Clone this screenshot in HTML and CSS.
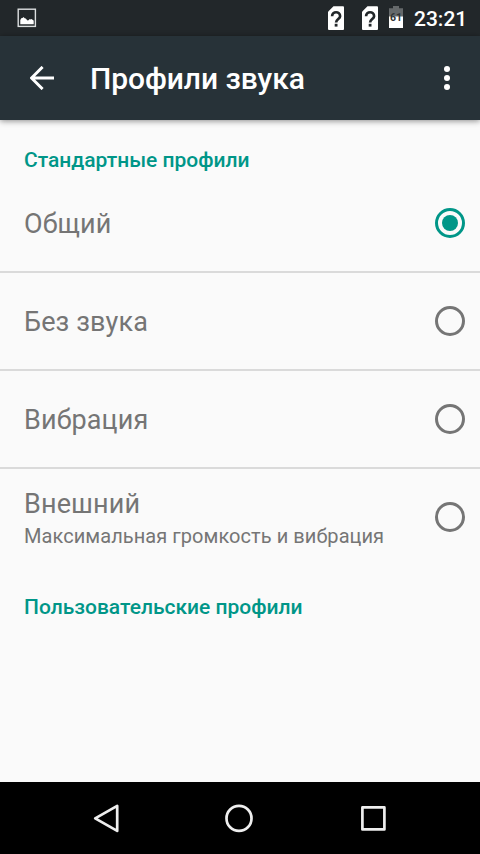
FILE: index.html
```html
<!DOCTYPE html>
<html lang="ru">
<head>
<meta charset="utf-8">
<title>Профили звука</title>
<link rel="stylesheet" href="styles.css">
</head>
<body>
<div class="screen">
  <div class="status">
    <svg class="picture" width="20" height="20" viewBox="0 0 20 20"><rect x="1.2" y="1.2" width="17.2" height="17.2" fill="none" stroke="#dcdfe0" stroke-width="1.4"/><path d="M3.3 16.2v-4.3l1-1.7 1.6-.4.6-.8 1.2 1.2 1 .2 1.8 2 1-.2 1.3-1.2 1 .4.8-.5.8.8.8.2.5 1v3.3z" fill="#fff"/></svg>
    <svg class="sim" width="17" height="24" viewBox="0 0 17 24"><path d="M5.500 .3H15q1 0 1 1V23q0 1-1 1H1q-1 0-1-1V5.800z" fill="#fff"/><path d="M4.100 10.200C4.100 4.900 12.100 4.900 12.100 10.200c0 2.700-4 2.900-4 6.200" fill="none" stroke="#22272a" stroke-width="2.700"/><rect x="6.700" y="17.800" width="2.800" height="2.800" fill="#22272a"/></svg>
    <svg class="sim sim-two" width="17" height="24" viewBox="0 0 17 24"><path d="M5.500 .3H15q1 0 1 1V23q0 1-1 1H1q-1 0-1-1V5.800z" fill="#fff"/><path d="M4.100 10.200C4.100 4.900 12.100 4.900 12.100 10.200c0 2.700-4 2.900-4 6.200" fill="none" stroke="#22272a" stroke-width="2.700"/><rect x="6.700" y="17.800" width="2.800" height="2.800" fill="#22272a"/></svg>
    <svg class="battery" width="14" height="22" viewBox="0 0 14 22"><path d="M0 2.200h4V0h6v2.200h4V11H0z" fill="#65696b"/><path d="M0 10.500h14V22H0z" fill="#fff"/><text class="level" x="7" y="15" text-anchor="middle">61</text></svg>
    <span class="clock">23:21</span>
  </div>
  <header class="bar">
    <svg class="back" width="24" height="24" viewBox="0 0 24 24"><path d="M24 12H2M12.600 .9L1.500 12l11.100 11.100" fill="none" stroke="#fff" stroke-width="2.900"/></svg>
    <h1 class="title">Профили звука</h1>
    <svg class="more" width="6" height="24" viewBox="0 0 6 24"><g fill="#fff"><circle cx="3" cy="3" r="3"/><circle cx="3" cy="12" r="3"/><circle cx="3" cy="21" r="3"/></g></svg>
  </header>
  <main class="content">
    <h2 class="category first">Стандартные профили</h2>
    <div class="row"><span class="name">Общий</span><span class="radio checked"></span></div>
    <div class="row"><span class="name">Без звука</span><span class="radio"></span></div>
    <div class="row"><span class="name">Вибрация</span><span class="radio"></span></div>
    <div class="row"><div class="label"><div class="name">Внешний</div><div class="summary">Максимальная громкость и вибрация</div></div><span class="radio"></span></div>
    <h2 class="category">Пользовательские профили</h2>
  </main>
  <nav class="nav">
    <svg width="28" height="30" viewBox="0 0 28 30"><path d="M25.200 2.900v25L3.200 15.400z" fill="none" stroke="#eee" stroke-width="2.700" stroke-linejoin="round"/></svg>
    <svg width="30" height="30" viewBox="0 0 30 30"><circle cx="15" cy="15.400" r="12.500" fill="none" stroke="#eee" stroke-width="2.700"/></svg>
    <svg width="28" height="30" viewBox="0 0 28 30"><rect x="3.400" y="4.400" width="22" height="22" fill="none" stroke="#eee" stroke-width="2.700" stroke-linejoin="round"/></svg>
  </nav>
</div>
</body>
</html>
```
FILE: styles.css
```css
* { box-sizing: border-box; }
body { margin: 0; font-family: Roboto, "Noto Sans", sans-serif; }
svg { display: block; flex: none; }
h1, h2 { margin: 0; font-weight: 500; white-space: nowrap; }
.screen { width: 480px; height: 854px; display: flex; flex-direction: column; background: #fafafa; overflow: hidden; }
.status { height: 36px; flex: none; display: flex; align-items: flex-start; background: #22272a; color: #fff; }
.picture { margin: 8px 0 0 17px; }
.sim { margin: 6px 0 0 291px; }
.sim-two { margin-left: 17px; }
.battery { margin: 6px 0 0 10px; }
.level { font: 700 10.5px Roboto, sans-serif; fill: #303436; }
.clock { margin-left: 11px; font-size: 21px; font-weight: 500; line-height: 38px; }
.bar { height: 84px; flex: none; display: flex; align-items: center; padding: 0 30px; background: #273238; color: #fff; box-shadow: 0 1px 6px rgba(0, 0, 0, .45); }
.title { flex: 1; margin-left: 36px; padding-top: 2px; font-size: 30px; line-height: 36px; letter-spacing: -.06px; }
.content { flex: 1; }
.category { height: 48px; padding: 28px 24px 0; font-size: 21px; line-height: 24px; color: #009688; }
.category.first { height: 55px; }
.row { height: 98px; display: flex; align-items: center; justify-content: space-between; padding: 0 15px 0 24px; border-bottom: 2px solid #dadada; color: #757575; }
.row:nth-of-type(4) { border-bottom-color: transparent; }
.name { padding-top: 2px; font-size: 27px; line-height: 36px; letter-spacing: .13px; }
.summary { font-size: 20px; line-height: 28px; letter-spacing: .06px; white-space: nowrap; }
.radio { width: 30px; height: 30px; flex: none; display: flex; align-items: center; justify-content: center; border: 3px solid #757575; border-radius: 50%; }
.checked { border-color: #009688; }
.checked::after { content: ""; width: 16px; height: 16px; border-radius: 50%; background: #009688; }
.nav { height: 72px; flex: none; display: flex; align-items: center; justify-content: space-between; padding: 0 93px 0 92px; background: #000; }
.nav svg:nth-child(2) { margin-left: -1px; }
```
